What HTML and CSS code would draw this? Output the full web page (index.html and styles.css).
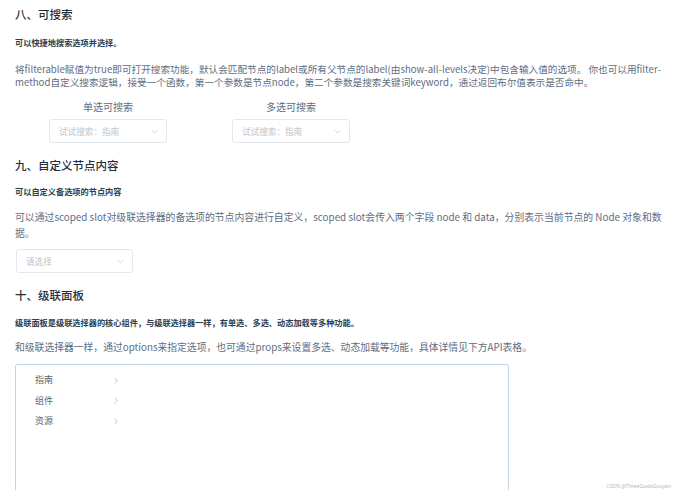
FILE: index.html
```html
<!DOCTYPE html>
<html lang="zh-CN">
<head>
<meta charset="utf-8">
<title>Cascader</title>
<link rel="stylesheet" href="styles.css">
</head>
<body>
<div class="page">
  <h3 class="title first">八、可搜索</h3>
  <p class="sub sub8">可以快捷地搜索选项并选择。</p>
  <p class="text text8">将filterable赋值为true即可打开搜索功能，默认会匹配节点的label或所有父节点的label(由show-all-levels决定)中包含输入值的选项。 你也可以用filter-method自定义搜索逻辑，接受一个函数，第一个参数是节点node，第二个参数是搜索关键词keyword，通过返回布尔值表示是否命中。</p>
  <div class="demo-row">
    <div class="block">
      <div class="demo-label">单选可搜索</div>
      <div class="select"><span class="ph">试试搜索：指南</span><svg class="chev" viewBox="0 0 10 6" width="7" height="5"><path d="M1 1 L5 5 L9 1" fill="none" stroke="#c6cad2" stroke-width="1.1"/></svg></div>
    </div>
    <div class="block">
      <div class="demo-label">多选可搜索</div>
      <div class="select"><span class="ph">试试搜索：指南</span><svg class="chev" viewBox="0 0 10 6" width="7" height="5"><path d="M1 1 L5 5 L9 1" fill="none" stroke="#c6cad2" stroke-width="1.1"/></svg></div>
    </div>
  </div>

  <h3 class="title t9">九、自定义节点内容</h3>
  <p class="sub sub9">可以自定义备选项的节点内容</p>
  <p class="text text9">可以通过scoped slot对级联选择器的备选项的节点内容进行自定义，scoped slot会传入两个字段 node 和 data，分别表示当前节点的 Node 对象和数据。</p>
  <div class="select single"><span class="ph">请选择</span><svg class="chev" viewBox="0 0 10 6" width="7" height="5"><path d="M1 1 L5 5 L9 1" fill="none" stroke="#c6cad2" stroke-width="1.1"/></svg></div>

  <h3 class="title t10">十、级联面板</h3>
  <p class="sub sub10">级联面板是级联选择器的核心组件，与级联选择器一样，有单选、多选、动态加载等多种功能。</p>
  <p class="text text10">和级联选择器一样，通过options来指定选项，也可通过props来设置多选、动态加载等功能，具体详情见下方API表格。</p>
  <div class="panel">
    <ul class="menu">
      <li class="item"><span>指南</span><svg class="arrow" viewBox="0 0 6 10" width="4" height="7"><path d="M1 1 L5 5 L1 9" fill="none" stroke="#a8abb2" stroke-width="1.1"/></svg></li>
      <li class="item"><span>组件</span><svg class="arrow" viewBox="0 0 6 10" width="4" height="7"><path d="M1 1 L5 5 L1 9" fill="none" stroke="#a8abb2" stroke-width="1.1"/></svg></li>
      <li class="item"><span>资源</span><svg class="arrow" viewBox="0 0 6 10" width="4" height="7"><path d="M1 1 L5 5 L1 9" fill="none" stroke="#a8abb2" stroke-width="1.1"/></svg></li>
    </ul>
  </div>
</div>
<div class="watermark">CSDN @ThreeGoatsGuoyan</div>
</body>
</html>
```

FILE: styles.css
```css
html, body {
  margin: 0;
  padding: 0;
  background: #ffffff;
  height: 490px;
  overflow: hidden;
}
body {
  font-family: "Noto Sans CJK SC", "Noto Sans", sans-serif;
  position: relative;
}
.page {
  padding: 0 7px 0 15px;
}
.title {
  margin: 0;
  font-size: 11.5px;
  line-height: 20px;
  font-weight: 500;
  color: #1f2f3d;
}
.title.first { margin-top: 4px; }
.title.t9 { margin-top: 12px; }
.title.t10 { margin-top: 12px; }
.sub {
  margin: 0;
  font-size: 8.2px;
  line-height: 12px;
  font-weight: 700;
  color: #2c3e50;
}
.sub8 { margin-top: 12px; }
.sub9 { margin-top: 10px; }
.sub10 { margin-top: 11px; }
.text {
  margin: 0;
  color: #5e6d82;
}
.text8 {
  margin-top: 15px;
  font-size: 9.65px;
  line-height: 13px;
}
.text9 {
  margin-top: 12px;
  font-size: 9.85px;
  line-height: 16px;
}
.text10 {
  margin-top: 12px;
  font-size: 9.8px;
  line-height: 14px;
}
.demo-row {
  display: flex;
  gap: 65px;
  margin-left: 34px;
  margin-top: 11px;
}
.block {
  width: 118px;
  display: flex;
  flex-direction: column;
  align-items: center;
}
.demo-label {
  font-size: 10px;
  line-height: 14px;
  color: #5e6d82;
}
.select {
  box-sizing: border-box;
  width: 118px;
  height: 24px;
  margin-top: 5px;
  border: 1px solid #e4e7ed;
  border-radius: 3px;
  display: flex;
  align-items: center;
  justify-content: space-between;
  padding: 0 8px 0 9px;
}
.select.single {
  margin-top: 8px;
  margin-left: 1px;
  width: 117px;
}
.ph {
  font-size: 8.6px;
  color: #c0c4cc;
}
.chev { display: block; }
.panel {
  box-sizing: border-box;
  margin-top: 10px;
  width: 494px;
  height: 160px;
  border: 1px solid #c7d5e3;
  border-radius: 2px;
}
.menu {
  list-style: none;
  margin: 0;
  padding: 5px 0 0 0;
  width: 112px;
}
.item {
  display: flex;
  justify-content: space-between;
  align-items: center;
  padding: 0 10px 0 19px;
  font-size: 9px;
  line-height: 20.5px;
  color: #606266;
}
.arrow { display: block; }
.watermark {
  position: absolute;
  right: 4px;
  bottom: 0;
  font-size: 5px;
  line-height: 7px;
  color: #b8b8b8;
  font-family: "Noto Sans", sans-serif;
}
```
